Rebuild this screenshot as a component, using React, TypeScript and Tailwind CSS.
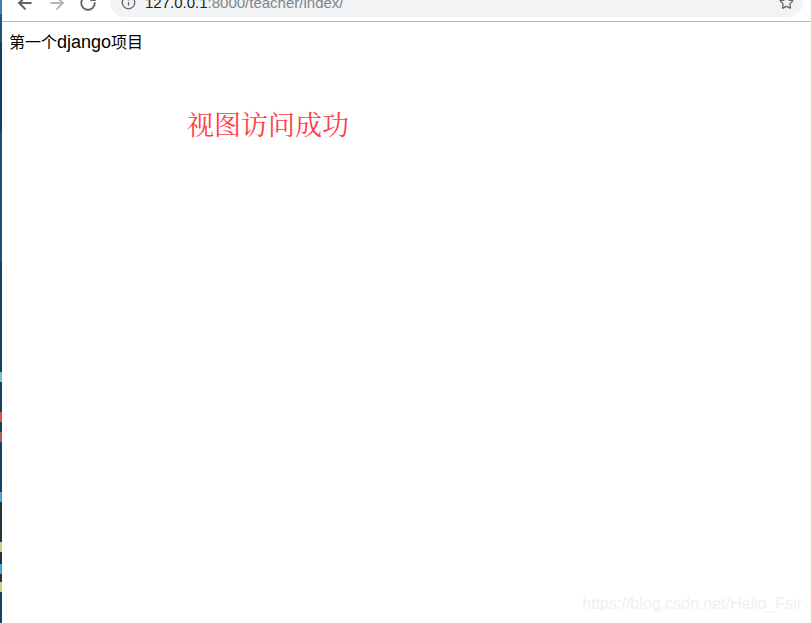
import { ArrowLeft, ArrowRight, RotateCw, Info, Star } from "lucide-react";

const stripSegments = [
  "h-[14px] bg-[#3f7fae]",
  "h-[28px] bg-[#1f5580]",
  "h-[90px] bg-[#123f63]",
  "h-[130px] bg-[#1c4f78]",
  "h-[110px] bg-[#173f5f]",
  "h-[10px] bg-[#6cc4c8]",
  "h-[30px] bg-[#173f5f]",
  "h-[10px] bg-[#d9534f]",
  "h-[10px] bg-[#173f5f]",
  "h-[10px] bg-[#b5566a]",
  "h-[50px] bg-[#173f5f]",
  "h-[10px] bg-[#4aa3d8]",
  "h-[40px] bg-[#23333f]",
  "h-[10px] bg-[#c8d27a]",
  "h-[12px] bg-[#23333f]",
  "h-[10px] bg-[#4aa3d8]",
  "h-[8px] bg-[#23333f]",
  "h-[10px] bg-[#c8d27a]",
  "h-[31px] bg-[#173f5f]",
];

const App = () => {
  return (
    <div className="flex h-[623px] w-[811px] overflow-hidden bg-white font-['Liberation_Sans','Noto_Sans_CJK_SC',sans-serif]">
      {/* Desktop edge behind the window */}
      <div className="flex w-[2px] shrink-0 flex-col">
        {stripSegments.map((segment, i) => (
          <div key={i} className={segment} />
        ))}
      </div>

      <div className="relative flex min-w-0 flex-1 flex-col">
        {/* Browser toolbar, cut off at the top */}
        <div className="flex h-[22px] shrink-0 items-end overflow-hidden border-b border-[#b8b8b8] pl-[13px] pr-[8px]">
          <div className="mb-[8px] flex w-[95px] shrink-0 items-center gap-[12px] text-[#5f6368]">
            <ArrowLeft size={20} strokeWidth={2.4} />
            <ArrowRight size={20} strokeWidth={2.4} className="text-[#b4b6b9]" />
            <RotateCw size={18} strokeWidth={2.4} />
          </div>
          <div className="mb-[4px] flex h-[34px] flex-1 items-end rounded-[15px] bg-[#f1f3f4] pb-[7px] pl-[11px] pr-[9px]">
            <Info size={15} strokeWidth={2} className="text-[#5f6368]" />
            <span className="ml-[9px] text-[15px] leading-none text-[#202124]">
              127.0.0.1<span className="text-[#80868b]">:8000/teacher/index/</span>
            </span>
            <Star size={15} strokeWidth={2} className="ml-auto text-[#5f6368]" />
          </div>
        </div>

        <p className="pl-[7px] pt-[10px] text-[16px] leading-[20px] text-black">
          第一个<span className="text-[18px]">django</span>项目
        </p>
        <p className="ml-[185px] mt-[51px] font-['Noto_Serif_CJK_SC','Noto_Sans_CJK_SC',serif] text-[27px] leading-[40px] text-[#ff3f46]">
          视图访问成功
        </p>

        {/* CSDN watermark */}
        <span className="absolute bottom-[9px] right-[9px] text-[16px] leading-[20px] text-[#f0f0f0]">
          https://blog.csdn.net/Hello_Fsir
        </span>
      </div>
    </div>
  );
};

export default App;
